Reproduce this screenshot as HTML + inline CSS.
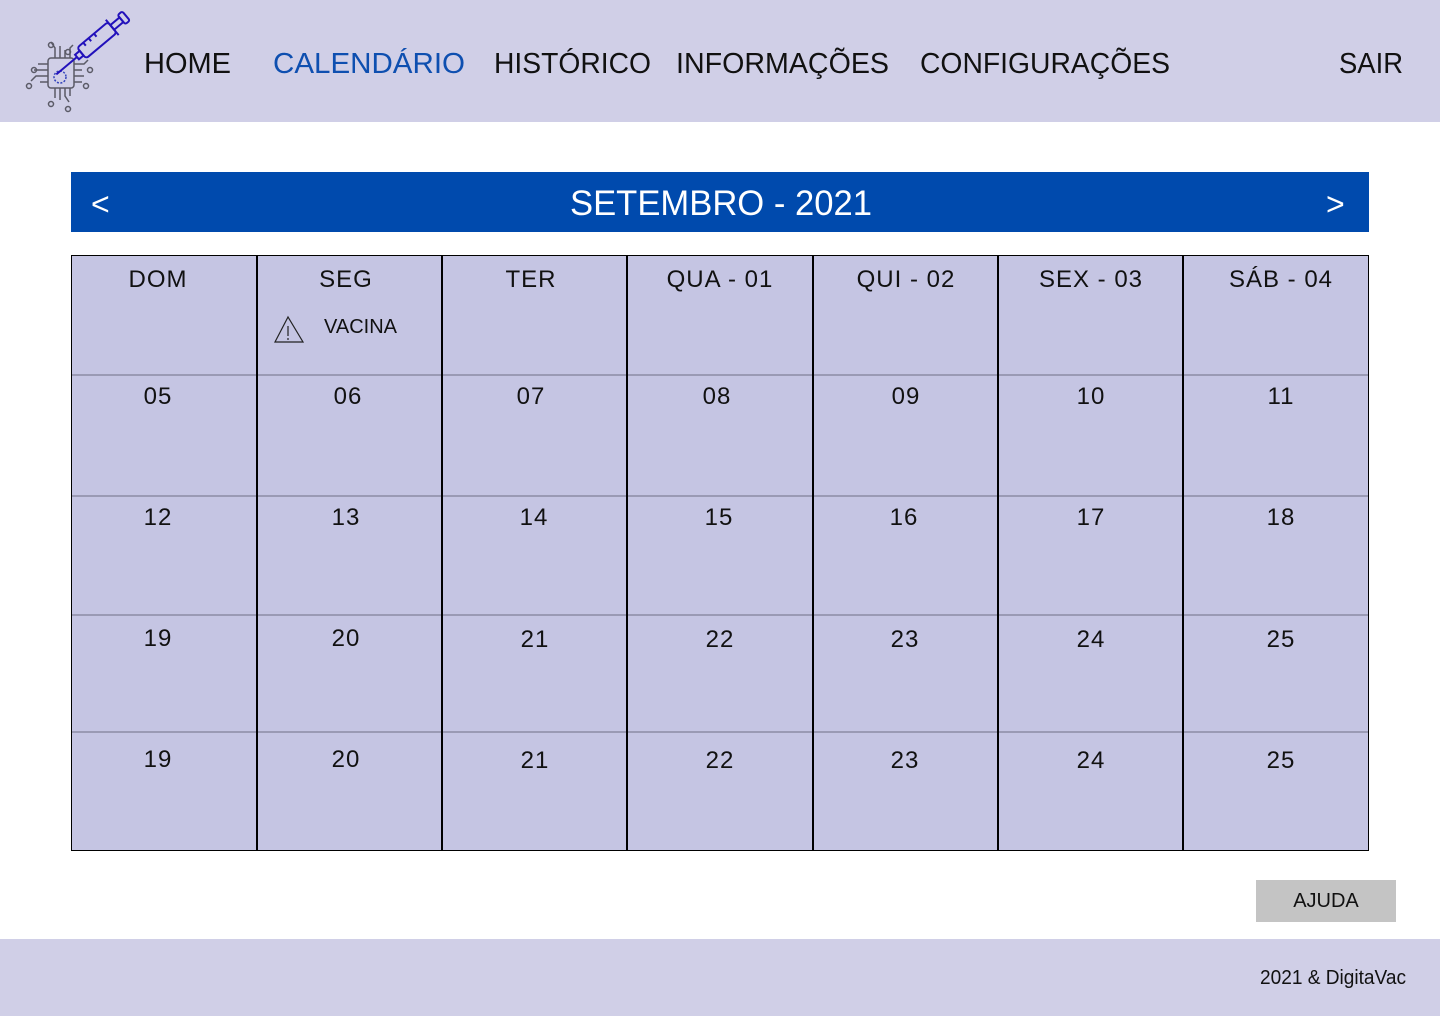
<!DOCTYPE html>
<html><head><meta charset="utf-8"><style>
*{margin:0;padding:0;box-sizing:border-box}
body{width:1440px;height:1016px;position:relative;background:#fff;font-family:"Liberation Sans",sans-serif;overflow:hidden}
.hdr{position:absolute;left:0;top:0;width:1440px;height:122px;background:#d0cfe7}
.ftr{position:absolute;left:0;top:939px;width:1440px;height:77px;background:#d0cfe7}
.bar{position:absolute;left:71px;top:172px;width:1298px;height:60px;background:#004aad}
.grid{position:absolute;left:71px;top:255px;width:1298px;height:596px;background:#c5c5e3;border:1.5px solid #000}
.v{position:absolute;top:255px;height:596px;width:2px;background:#000}
.h{position:absolute;left:72px;width:1296px;height:2px;background:#9a9ab4}
.t{position:absolute;font-size:24px;color:#111;text-align:center;width:180px;letter-spacing:1px}
.btn{position:absolute;left:1256px;top:880px;width:140px;height:42px;background:#c4c4c4;font-size:20px;text-align:center;line-height:42px;color:#111}
</style></head><body>
<div class="hdr"></div>
<svg style="position:absolute;left:20px;top:0" width="120" height="120" viewBox="0 0 120 120">
<g fill="none" stroke="#5a5a66" stroke-width="1.5">
<rect x="28" y="58" width="26" height="30" rx="3"/>
<path d="M35 58v-10l-4-6M40 58v-12M45 58v-8M50 58v-10l3-3M35 88v10M40 88v12M45 88v8l4 6M50 88v8M28 64h-10M28 70h-14M28 76h-12l-5 5M28 82h-8M54 64h10l4-4M54 70h8M54 76h10M54 82h8"/>
<circle cx="31" cy="45" r="2.5"/><circle cx="48" cy="52" r="2.5"/><circle cx="14" cy="70" r="2.5"/><circle cx="9" cy="86" r="2.5"/><circle cx="70" cy="70" r="2.5"/><circle cx="66" cy="86" r="2.5"/><circle cx="31" cy="104" r="2.5"/><circle cx="48" cy="109" r="2.5"/>
</g>
<circle cx="40" cy="77" r="6" fill="none" stroke="#3344bb" stroke-width="1.5" stroke-dasharray="2 1.5"/>
<g transform="translate(57,57) rotate(-40)" fill="none" stroke="#2211bb" stroke-width="2">
<path d="M-27 0H0"/>
<path d="M0 -3h6v6h-6z"/>
<rect x="6" y="-7" width="40" height="14" rx="3"/>
<path d="M46 -10v20"/>
<rect x="46" y="-3" width="12" height="6"/>
<rect x="58" y="-6" width="6" height="12" rx="2"/>
<path d="M14 -7v4M21 -7v4M28 -7v4"/>
</g>
</svg>
<svg style="position:absolute;left:0;top:0" width="1440" height="122">
<g font-family="Liberation Sans,sans-serif" font-size="29" fill="#111">
<text x="144" y="73" textLength="87" lengthAdjust="spacingAndGlyphs">HOME</text>
<text x="273" y="73" textLength="192" lengthAdjust="spacingAndGlyphs" fill="#0e4fb0">CALENDÁRIO</text>
<text x="494" y="73" textLength="157" lengthAdjust="spacingAndGlyphs">HISTÓRICO</text>
<text x="676" y="73" textLength="213" lengthAdjust="spacingAndGlyphs">INFORMAÇÕES</text>
<text x="920" y="73" textLength="250" lengthAdjust="spacingAndGlyphs">CONFIGURAÇÕES</text>
<text x="1339" y="73" textLength="64" lengthAdjust="spacingAndGlyphs">SAIR</text>
</g></svg>
<div class="bar"></div>
<svg style="position:absolute;left:71px;top:172px" width="1298" height="60">
<g font-family="Liberation Sans,sans-serif" fill="#fff">
<text x="20" y="43" font-size="32">&lt;</text>
<text x="1255" y="43" font-size="32">&gt;</text>
<text x="499" y="43" font-size="35" textLength="302" lengthAdjust="spacingAndGlyphs">SETEMBRO - 2021</text>
</g></svg>
<div class="grid"></div>
<div class="h" style="top:374px"></div>
<div class="h" style="top:495px"></div>
<div class="h" style="top:614px"></div>
<div class="h" style="top:731px"></div>
<div class="v" style="left:256px"></div>
<div class="v" style="left:441px"></div>
<div class="v" style="left:626px"></div>
<div class="v" style="left:812px"></div>
<div class="v" style="left:997px"></div>
<div class="v" style="left:1182px"></div>
<div class="t" style="left:68px;top:266px">DOM</div>
<div class="t" style="left:256px;top:266px">SEG</div>
<div class="t" style="left:441px;top:266px">TER</div>
<div class="t" style="left:630px;top:266px">QUA - 01</div>
<div class="t" style="left:816px;top:266px">QUI - 02</div>
<div class="t" style="left:1001px;top:266px">SEX - 03</div>
<div class="t" style="left:1191px;top:266px">SÁB - 04</div>
<svg style="position:absolute;left:273px;top:315px" width="32" height="30"><path d="M15 2L2 27h28z" fill="none" stroke="#222" stroke-width="1.2"/><path d="M15 11v10M15 23v2" stroke="#222" stroke-width="1.2"/></svg>
<div style="position:absolute;left:324px;top:316px;font-size:20px;color:#111">VACINA</div>
<div class="t" style="left:68px;top:383px">05</div><div class="t" style="left:258px;top:383px">06</div><div class="t" style="left:441px;top:383px">07</div><div class="t" style="left:627px;top:383px">08</div><div class="t" style="left:816px;top:383px">09</div><div class="t" style="left:1001px;top:383px">10</div><div class="t" style="left:1191px;top:383px">11</div>
<div class="t" style="left:68px;top:504px">12</div><div class="t" style="left:256px;top:504px">13</div><div class="t" style="left:444px;top:504px">14</div><div class="t" style="left:629px;top:504px">15</div><div class="t" style="left:814px;top:504px">16</div><div class="t" style="left:1001px;top:504px">17</div><div class="t" style="left:1191px;top:504px">18</div>
<div class="t" style="left:68px;top:625px">19</div><div class="t" style="left:256px;top:625px">20</div><div class="t" style="left:445px;top:626px">21</div><div class="t" style="left:630px;top:626px">22</div><div class="t" style="left:815px;top:626px">23</div><div class="t" style="left:1001px;top:626px">24</div><div class="t" style="left:1191px;top:626px">25</div>
<div class="t" style="left:68px;top:746px">19</div><div class="t" style="left:256px;top:746px">20</div><div class="t" style="left:445px;top:747px">21</div><div class="t" style="left:630px;top:747px">22</div><div class="t" style="left:815px;top:747px">23</div><div class="t" style="left:1001px;top:747px">24</div><div class="t" style="left:1191px;top:747px">25</div>
<div class="btn">AJUDA</div>
<div class="ftr"></div>
<svg style="position:absolute;left:1255px;top:960px" width="160" height="30"><text x="5" y="24" font-family="Liberation Sans,sans-serif" font-size="20" fill="#111" textLength="146" lengthAdjust="spacingAndGlyphs">2021 &amp; DigitaVac</text></svg>
</body></html>
